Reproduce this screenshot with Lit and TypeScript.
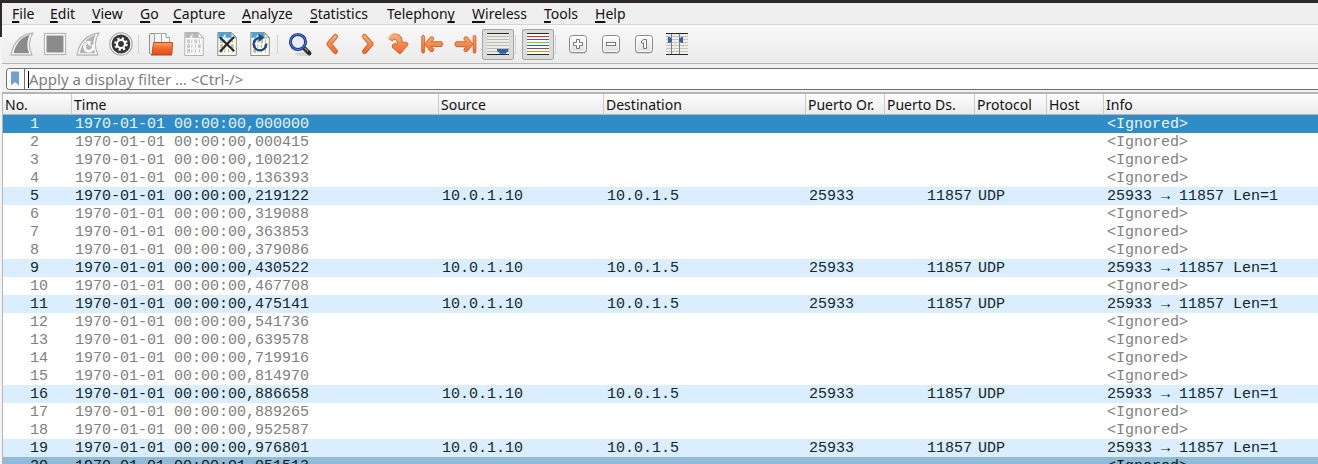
import { LitElement, html, css, svg, nothing } from "lit";
import { customElement } from "lit/decorators.js";
import { classMap } from "lit/directives/class-map.js";

interface Packet {
  no: number;
  time: string;
  kind: "ignored" | "udp" | "selected" | "current";
}

const MENUS: [string, string, string][] = [
  ["", "F", "ile"],
  ["", "E", "dit"],
  ["", "V", "iew"],
  ["", "G", "o"],
  ["", "C", "apture"],
  ["", "A", "nalyze"],
  ["", "S", "tatistics"],
  ["Telephon", "y", ""],
  ["", "W", "ireless"],
  ["", "T", "ools"],
  ["", "H", "elp"],
];

const COLUMNS = ["No.", "Time", "Source", "Destination", "Puerto Or.", "Puerto Ds.", "Protocol", "Host", "Info"];

const UDP_ROWS = [5, 9, 11, 16, 19];

const TIMES = [
  "00,000000", "00,000415", "00,100212", "00,136393", "00,219122", "00,319088", "00,363853",
  "00,379086", "00,430522", "00,467708", "00,475141", "00,541736", "00,639578", "00,719916",
  "00,814970", "00,886658", "00,889265", "00,952587", "00,976801", "01,051513",
];

const PACKETS: Packet[] = TIMES.map((t, i) => {
  const no = i + 1;
  const kind = no === 1 ? "selected" : no === 20 ? "current" : UDP_ROWS.includes(no) ? "udp" : "ignored";
  return { no, time: `1970-01-01 00:00:${t}`, kind };
});

const fin = (fill: string) => svg`
  <path d="M5 26C7 15 13 6 27 4C23 10 22 18 26 26Z" fill="#fff" stroke="#b8b8b8" stroke-width="1.3" stroke-linejoin="round"/>
  <path d="M7.5 24.2C9.5 15.5 14.5 8 23.8 6C21 11 20.6 18 23.2 24.2Z" fill="${fill}"/>`;

const page = (top: string, paper: string, edge: string, ink: string) => svg`
  <path d="M6.8 3.5H20.5L25.3 8.5V26.5H6.8Z" fill="${paper}" stroke="${edge}"/>
  <path d="M7.3 4H20.2V8.8H7.3Z" fill="${top}"/>
  <path d="M11.5 8.8L14.5 4.5V8.8Z" fill="${paper}"/>
  <path d="M20.2 3.8V8.8H25Z" fill="#fff" stroke="${edge}" stroke-width=".8"/>
  <g fill="none" stroke="${ink}" stroke-width=".9">
    <rect x="9.8" y="11" width="1.6" height="2.6"/><path d="M13.8 10.6V14M21.4 10.6V14"/><rect x="17" y="11" width="1.6" height="2.6"/>
    <rect x="9.8" y="15.8" width="1.6" height="2.6"/><path d="M13.8 15.4V18.8M17.4 15.4V18.8"/><rect x="20.6" y="15.8" width="1.6" height="2.6"/>
    <rect x="9.8" y="20.6" width="1.6" height="2.6"/><path d="M13.8 20.2V23.6M17.4 20.2V23.6M21.4 20.2V23.6"/>
  </g>`;

const keycap = svg`
  <rect x="7" y="7" width="18" height="18" rx="3.5" fill="#d2d2d2"/>
  <rect x="7.5" y="6.5" width="17" height="17" rx="3" fill="url(#cap)" stroke="#888"/>
  <rect x="8.7" y="7.7" width="14.6" height="14.6" rx="2" fill="none" stroke="#fff"/>`;

const ORANGE = "url(#orange)";
const EDGE = "#d9622c";

const ICONS: Record<string, unknown> = {
  start: fin("#8b8b8b"),
  stop: svg`<rect x="5.5" y="4.5" width="21" height="21" fill="#fff" stroke="#b8b8b8" stroke-width="1.3"/>
    <rect x="7.5" y="6.5" width="17" height="17" fill="#8b8b8b"/>`,
  restart: svg`${fin("#b4b4b4")}
    <path d="M14.2 14.5A4.3 4.3 0 1 0 20.5 15.6" fill="none" stroke="#fff" stroke-width="2.6"/>
    <path d="M12.5 12H18.5V17.5Z" fill="#fff"/>`,
  options: svg`<circle cx="16" cy="15" r="11.2" fill="#fff" stroke="#a9a9a9" stroke-width="1.2"/>
    <circle cx="16" cy="15" r="9.4" fill="#353535"/>
    <circle cx="16" cy="15" r="5.6" fill="none" stroke="#fff" stroke-width="2.4" stroke-dasharray="2.2 2.2"/>
    <circle cx="16" cy="15" r="4" fill="none" stroke="#fff" stroke-width="2.2"/>`,
  open: svg`<path d="M4.5 24.5V5.5Q4.5 4.5 6 4.5H9L11 8V25.5H6Z" fill="#efefef" stroke="#8e8e8e"/>
    <path d="M9.5 14V4.5H15.5L18.5 8V14Z" fill="#f6f6f6" stroke="#a1a1a1"/>
    <path d="M16.5 14V4.5H21L24.5 8.5V14Z" fill="#fff" stroke="#a1a1a1"/>
    <path d="M21 4.5V8.5H24.5" fill="#fff" stroke="#a1a1a1"/>
    <path d="M8.5 13.5H27.5L26.8 25.5H7Z" fill="url(#folder)" stroke="#c94a16" stroke-linejoin="round"/>
    <path d="M6 26.5H27" stroke="#9f8f87" stroke-width=".8"/>`,
  save: page("#b7b7b7", "#f7f7f7", "#b4b4b4", "#bdbdbd"),
  close: svg`${page("#3cabe5", "#fdfdec", "#8c9087", "#a9aaa0")}
    <path d="M9.5 9L22.5 21.5M22.5 8.5L9.5 22" stroke="#292929" stroke-width="2.3" stroke-linecap="round"/>`,
  reload: svg`${page("#3cabe5", "#fdfdec", "#8c9087", "#a9aaa0")}
    <path d="M16 8.8A6.3 6.3 0 1 0 22.2 14.5" fill="none" stroke="#1d4687" stroke-width="2.3"/>
    <path d="M14.5 4.5L20.5 8.8L14.5 13Z" fill="#1d4687"/>`,
  find: svg`<ellipse cx="19" cy="25" rx="8" ry="2" fill="#d5d5d5"/>
    <path d="M20.5 19.5L25.3 24.3" stroke="#292929" stroke-width="4.4" stroke-linecap="round"/>
    <path d="M20.5 18.8L24 22.3" stroke="#8a8a8a" stroke-width="1.4"/>
    <circle cx="14" cy="13" r="7.6" fill="#e7ebf2" stroke="#1f3a94" stroke-width="3"/>
    <circle cx="14" cy="13" r="7.6" fill="none" stroke="#587bd2" stroke-width="1"/>
    <path d="M9.5 13A4.5 4.5 0 0 1 14 8.5" fill="none" stroke="#fff" stroke-width="1.6"/>`,
  prev: svg`<path d="M18.5 7.5L12 15L18.5 22.5" fill="none" stroke="${EDGE}" stroke-width="5" stroke-linecap="round" stroke-linejoin="round"/>
    <path d="M18.5 7.5L12 15L18.5 22.5" fill="none" stroke="${ORANGE}" stroke-width="3.2" stroke-linecap="round" stroke-linejoin="round"/>`,
  next: svg`<path d="M14.5 7.5L21 15L14.5 22.5" fill="none" stroke="${EDGE}" stroke-width="5" stroke-linecap="round" stroke-linejoin="round"/>
    <path d="M14.5 7.5L21 15L14.5 22.5" fill="none" stroke="${ORANGE}" stroke-width="3.2" stroke-linecap="round" stroke-linejoin="round"/>`,
  goto: svg`<path d="M6 9.5C8 3 19.8 3 19.2 14L22.5 13.2Q26 13.5 24.5 16.5L17 25L9.2 18.2Q8.8 14.8 12 14.6L14.2 15.6C14.4 10.5 12 8.8 9.2 12Z" fill="${ORANGE}" stroke="${EDGE}" stroke-linejoin="round"/>
    <path d="M5.5 10.5C7 4.5 11.5 3.8 14 5.4" fill="none" stroke="#f2bd98" stroke-width="1.5"/>`,
  first: svg`<rect x="5.8" y="6.5" width="2.6" height="17.5" rx="1" fill="${ORANGE}" stroke="${EDGE}"/>
    <path d="M8.6 15.2L14.5 8Q18 7 17.6 10.5L15.2 12.8H25.5Q28 15.2 25.5 17.6H15.2L17.6 20Q18 23.5 14.5 22.5Z" fill="${ORANGE}" stroke="${EDGE}" stroke-linejoin="round"/>`,
  last: svg`<rect x="24.2" y="6.5" width="2.6" height="17.5" rx="1" fill="${ORANGE}" stroke="${EDGE}"/>
    <path d="M24 15.2L18.1 8Q14.6 7 15 10.5L17.4 12.8H7Q4.6 15.2 7 17.6H17.4L15 20Q14.6 23.5 18.1 22.5Z" fill="${ORANGE}" stroke="${EDGE}" stroke-linejoin="round"/>`,
  autoscroll: svg`<rect x="5" y="4" width="22" height="22" fill="#edeee9"/>
    <path d="M5 7.5H27M5 10.5H27M5 13.5H27M5 16.5H27M5 19.5H27M5 22.5H27" stroke="#b9bbb4"/>
    <path d="M5 4.5H27M5 25.5H27" stroke="#252829"/>
    <path d="M15 20H26.5V21.5L23.5 24.8H18L15 21.5Z" fill="#3465a4"/>`,
  colorize: svg`<rect x="5" y="4" width="22" height="22" fill="#fafafa"/>
    <path d="M5 4.5H27M5 25.5H27" stroke="#252829"/>
    <path d="M5 7.5H27" stroke="#ef2929"/><path d="M5 10.5H27" stroke="#3465a4"/>
    <path d="M5 13.5H27" stroke="#73d216"/><path d="M5 16.5H27" stroke="#3465a4"/>
    <path d="M5 19.5H27" stroke="#75507b"/><path d="M5 22.5H27" stroke="#c4a000"/>`,
  zoomIn: svg`${keycap}<path d="M14.5 10.5H17.5V13.5H20.5V16.5H17.5V19.5H14.5V16.5H11.5V13.5H14.5Z" fill="#fff" stroke="#777"/>`,
  zoomOut: svg`${keycap}<rect x="11.5" y="13.5" width="9" height="3" fill="#fff" stroke="#777"/>`,
  zoomReset: svg`${keycap}<path d="M15.5 10.5H18.5V19.5H15.5V14H13.5V12Z" fill="#fff" stroke="#777"/>`,
  resize: svg`<rect x="5" y="4" width="22" height="22" fill="#edeee9"/>
    <path d="M5 7.5H27M5 10.5H27M5 13.5H27M5 16.5H27M5 19.5H27M5 22.5H27" stroke="#c3c5be"/>
    <path d="M10.5 4V26M18.5 4V26" stroke="#7e817b"/>
    <path d="M5 4.5H27M5 25.5H27" stroke="#252829"/>
    <path d="M7 8H8.5L11 10V12.5L8.5 14H7ZM22 8H20.5L18 10V12.5L20.5 14H22Z" fill="#3465a4"/>`,
};

const TOOLBAR: [string, string][][] = [
  [["start", "Start capturing"], ["stop", "Stop capturing"], ["restart", "Restart capture"], ["options", "Capture options"]],
  [["open", "Open file"], ["save", "Save file"], ["close", "Close file"], ["reload", "Reload file"]],
  [
    ["find", "Find packet"], ["prev", "Previous packet"], ["next", "Next packet"], ["goto", "Go to packet"],
    ["first", "First packet"], ["last", "Last packet"], ["autoscroll", "Auto scroll"],
  ],
  [["colorize", "Colorize packets"]],
  [["zoomIn", "Zoom in"], ["zoomOut", "Zoom out"], ["zoomReset", "Normal size"], ["resize", "Resize columns"]],
];

@customElement("tool-button")
export class ToolButton extends LitElement {
  static properties = { icon: {}, label: {}, pressed: { type: Boolean } };
  declare icon: string;
  declare label: string;
  declare pressed: boolean;

  static styles = css`
    :host { display: block; }
    .button {
      display: block;
      box-sizing: border-box;
      width: 32px;
      height: 31px;
      padding: 0;
      border: 0;
      border-radius: 3px;
      background: none;
    }
    .pressed { background: #dbdbdb; box-shadow: inset 0 0 0 1px #a5a5a5; }
    .icon { display: block; width: 32px; height: 31px; }
  `;

  render() {
    return html`<button
      class=${classMap({ button: true, pressed: this.pressed })}
      aria-label=${this.label}
      aria-pressed=${this.pressed ? "true" : nothing}
    >
      <svg class="icon" viewBox="0 0 32 31" aria-hidden="true">
        <defs>
          <linearGradient id="orange" gradientUnits="userSpaceOnUse" x1="0" y1="5" x2="0" y2="25">
            <stop offset="0" stop-color="#f7b673" /><stop offset="1" stop-color="#ee6429" />
          </linearGradient>
          <linearGradient id="folder" x1="0" y1="0" x2="0" y2="1">
            <stop offset="0" stop-color="#f9a06b" /><stop offset=".5" stop-color="#ee6a2c" /><stop offset="1" stop-color="#e14e14" />
          </linearGradient>
          <linearGradient id="cap" x1="0" y1="0" x2="0" y2="1">
            <stop offset="0" stop-color="#fff" /><stop offset="1" stop-color="#dcdcdc" />
          </linearGradient>
        </defs>
        ${ICONS[this.icon]}
      </svg>
    </button>`;
  }
}

@customElement("packet-table")
export class PacketTable extends LitElement {
  static styles = css`
    :host { display: block; overflow: hidden; border-top: 2px solid #b5b5b5; border-left: 1px solid #b5b5b5; background: #fff; }
    .table { width: 100%; table-layout: fixed; border-collapse: separate; border-spacing: 0; }
    .no { width: 68px; }
    .time { width: 367px; }
    .source { width: 165px; }
    .destination { width: 202px; }
    .origin { width: 79px; }
    .target { width: 90px; }
    .protocol { width: 72px; }
    .host { width: 57px; }
    .head {
      box-sizing: border-box;
      height: 21px;
      padding: 2px 0 0 2px;
      border-left: 1px solid #cbcbcb;
      border-bottom: 1px solid #b5b5b5;
      background: linear-gradient(#fdfdfd, #ebebeb);
      font: 14px/18px "Noto Sans", sans-serif;
      color: #111;
      text-align: left;
      white-space: nowrap;
    }
    .head:first-child { border-left: 0; }
    .cell {
      padding: 2px 2px 0 4px;
      font: 15px/16px "Liberation Mono", monospace;
      height: 16px;
      white-space: pre;
    }
    .cell:first-child { padding-left: 27px; }
    .right { text-align: right; }
    .ignored { color: #808080; }
    .selected { background: #308cc6; color: #eaf4fb; }
    .udp { background: #daeeff; color: #12272e; }
    .current { background: #90bbd8; color: #0c1316; }
  `;

  private row(p: Packet) {
    const udp = p.kind === "udp";
    return html`<tr class=${p.kind}>
      <td class="cell">${p.no}</td>
      <td class="cell">${p.time}</td>
      <td class="cell">${udp ? "10.0.1.10" : nothing}</td>
      <td class="cell">${udp ? "10.0.1.5" : nothing}</td>
      <td class="cell">${udp ? "25933" : nothing}</td>
      <td class="cell right">${udp ? "11857" : nothing}</td>
      <td class="cell">${udp ? "UDP" : nothing}</td>
      <td class="cell"></td>
      <td class="cell">${udp ? "25933 → 11857 Len=1" : "<Ignored>"}</td>
    </tr>`;
  }

  render() {
    return html`<table class="table">
      <colgroup>
        <col class="no" /><col class="time" /><col class="source" /><col class="destination" /><col class="origin" />
        <col class="target" /><col class="protocol" /><col class="host" /><col />
      </colgroup>
      <thead>
        <tr>${COLUMNS.map((c) => html`<th class="head" scope="col">${c}</th>`)}</tr>
      </thead>
      <tbody>${PACKETS.map((p) => this.row(p))}</tbody>
    </table>`;
  }
}

@customElement("app-root")
export class AppRoot extends LitElement {
  static styles = css`
    :host {
      display: flex;
      flex-direction: column;
      box-sizing: border-box;
      height: 100vh;
      overflow: hidden;
      border-top: 3px solid #2d2a2c;
      background: linear-gradient(#2d2a2c 34px, #f4f4f4 34px);
      padding-left: 2px;
      font: 14px/20px "Noto Sans", sans-serif;
      color: #111;
    }
    .menubar {
      display: grid;
      grid-template-columns: 38px 42px 48px 33px 69px 68px 77px 85px 72px 51px auto;
      justify-content: start;
      height: 21px;
      padding-left: 10px;
      border-bottom: 1px solid #d5d5d5;
      background: #efefef;
    }
    .menu { padding: 0; border: 0; background: none; font: inherit; line-height: 21px; color: inherit; text-align: left; white-space: nowrap; }
    .key { text-decoration: underline; text-decoration-thickness: 2px; text-underline-offset: 2px; text-decoration-skip-ink: none; }
    .toolbar {
      display: flex;
      gap: 1px;
      padding: 4px 4px 3px;
      border-bottom: 1px solid #b5b5b5;
      background: linear-gradient(#f8f8f8, #ebebeb);
    }
    .separator { box-sizing: border-box; width: 6px; height: 19px; margin-top: 6px; border-left: 1px solid #d4d4d4; border-right: 4px solid transparent; }
    .filterbar { padding: 4px 0 2px 4px; background: #f1f1f1; }
    .filter {
      display: flex;
      align-items: center;
      box-sizing: border-box;
      height: 22px;
      overflow: hidden;
      border: 1px solid #6f6f6f;
      border-right: 0;
      border-radius: 4px 0 0 4px;
      background: #fff;
    }
    .bookmark { display: block; box-sizing: border-box; width: 18px; height: 20px; padding: 0; border: 0; border-right: 1px solid #6f6f6f; background: #fafafa; }
    .glyph { display: block; width: 17px; height: 20px; }
    .caret { width: 1px; height: 17px; margin-left: 3px; background: #000; }
    .input { flex: 1; min-width: 0; height: 20px; padding: 0; border: 0; outline: 0; background: none; font: 15px/20px "Noto Sans", sans-serif; color: #111; }
    .input::placeholder { color: #808080; opacity: 1; }
    .packets { flex: 1; min-height: 0; }
  `;

  render() {
    return html`
      <nav class="menubar" aria-label="Main menu">
        ${MENUS.map(([pre, key, post]) => html`<button class="menu">${pre}<span class="key">${key}</span>${post}</button>`)}
      </nav>
      <div class="toolbar" role="toolbar" aria-label="Main toolbar">
        ${TOOLBAR.map(
          (group, i) => html`${i ? html`<span class="separator"></span>` : nothing}${group.map(
            ([icon, label]) => html`<tool-button
              .icon=${icon}
              .label=${label}
              .pressed=${icon === "autoscroll" || icon === "colorize"}
            ></tool-button>`
          )}`
        )}
      </div>
      <div class="filterbar">
        <div class="filter">
          <button class="bookmark" aria-label="Filter bookmarks">
            <svg class="glyph" viewBox="0 0 17 20" aria-hidden="true"><path d="M4 2.5H12V16.5L8 13L4 16.5Z" fill="#729fcf" /></svg>
          </button>
          <span class="caret"></span>
          <input class="input" type="text" aria-label="Display filter" placeholder="Apply a display filter … <Ctrl-/>" />
        </div>
      </div>
      <packet-table class="packets"></packet-table>
    `;
  }
}
